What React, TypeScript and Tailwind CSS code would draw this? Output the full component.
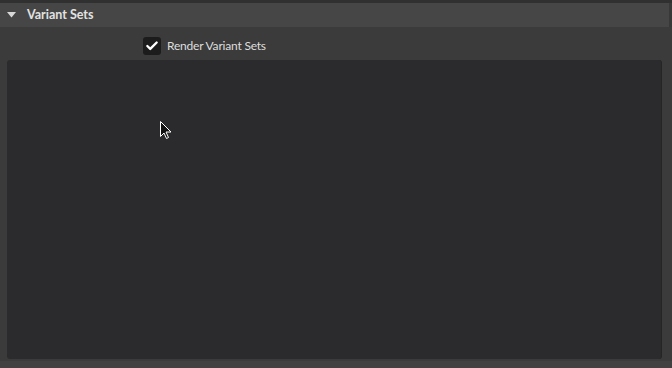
import { Check } from "lucide-react"

function Cursor() {
  return (
    <svg width="13" height="19" viewBox="0 0 13 19" className="absolute left-[160px] top-[121px]">
      <path d="M0.5 0.5 L0.5 15.5 L4 12 L6.5 17.5 L8.5 16.5 L6 11 L11 11 Z" fill="#111" stroke="#fff" strokeWidth="1" />
    </svg>
  )
}

export default function App() {
  return (
    <div
      className="relative flex h-[368px] w-[672px] flex-col overflow-hidden bg-[#3b3b3b] text-[12px] text-[#dcdcdc]"
      style={{ fontFamily: 'Lato, "Liberation Sans", sans-serif' }}
    >
      <div className="h-[3px] bg-[#303030]" />
      <div className="flex h-[24px] items-center gap-[11px] border-r-[3px] border-[#383838] bg-[#464646] pl-[7px]">
        <svg width="9" height="6" viewBox="0 0 9 6">
          <path d="M0 0 L9 0 L4.5 5.5 Z" fill="#d8d8d8" />
        </svg>
        <span className="text-[12.5px] font-bold text-[#e2e2e2]">Variant Sets</span>
      </div>
      <div className="flex flex-1 flex-col">
        <div className="flex h-[33px] items-center gap-[6px] pl-[143px] pt-[5px]">
          <span className="grid size-[18px] place-items-center rounded-[3px] bg-[#1c1c1c]">
            <Check className="size-[14px] text-white" strokeWidth={4} />
          </span>
          <span className="text-[12px] tracking-[-0.2px] text-[#dedede]">Render Variant Sets</span>
        </div>
        <div className="mx-[7px] mr-[10px] mb-[2px] flex-1 rounded-[3px] border-r border-[#252525] bg-[#2b2b2d]" />
      </div>
      <div className="h-[7px] bg-[#414141]" />
      <Cursor />
    </div>
  )
}
